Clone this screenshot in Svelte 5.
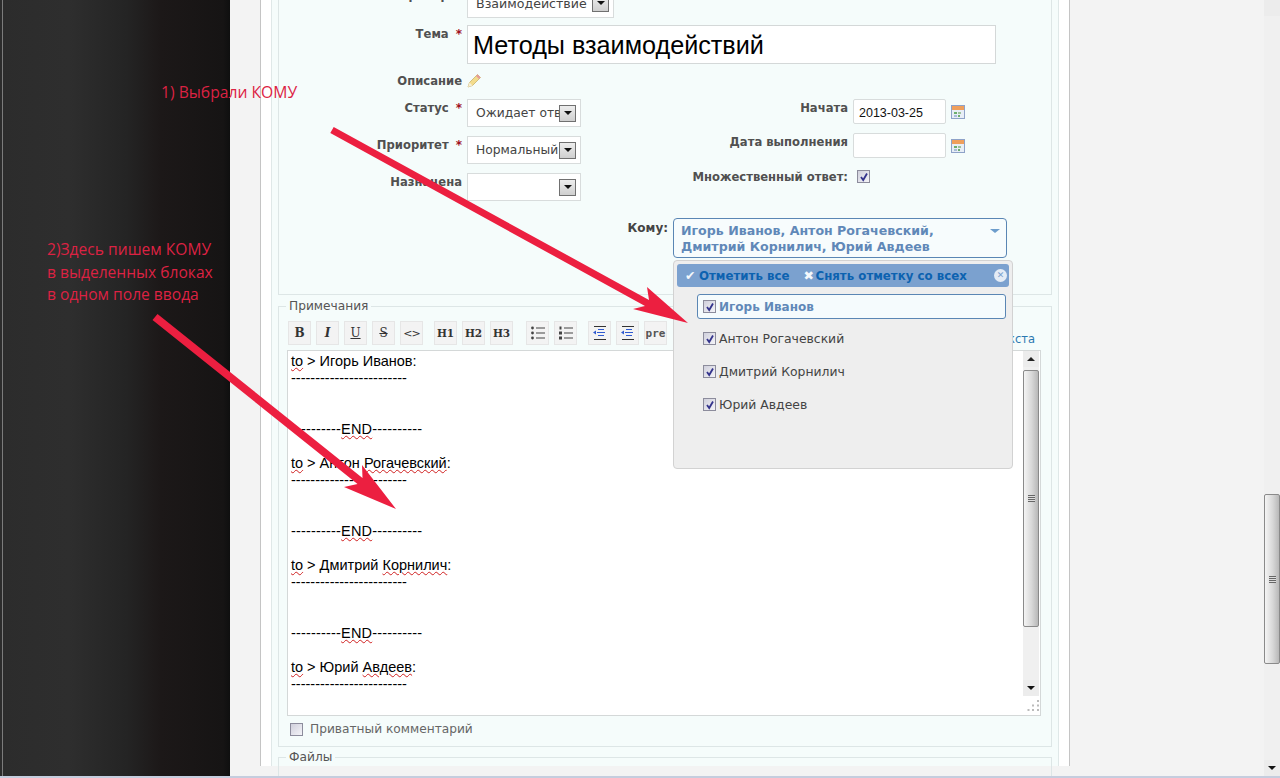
<script lang="ts">
	const mainRows = [
		{ label: 'Статус', req: true, value: 'Ожидает ответа' },
		{ label: 'Приоритет', req: true, value: 'Нормальный' },
		{ label: 'Назначена', req: false, value: '' }
	];
	const people = ['Игорь Иванов', 'Антон Рогачевский', 'Дмитрий Корнилич', 'Юрий Авдеев'];
	const notes = [
		{ name: 'Игорь', surname: 'Иванов', wavy: false },
		{ name: 'Антон', surname: 'Рогачевский', wavy: true },
		{ name: 'Дмитрий', surname: 'Корнилич', wavy: true },
		{ name: 'Юрий', surname: 'Авдеев', wavy: true }
	];
	const dashes = '------------------------';
	const side = '----------';
</script>

{#snippet check(on: boolean)}
	<span class="check">
		{#if on}
			<svg width="10" height="10" viewBox="0 0 10 10"><path d="M2 5 L4.2 8 L8 1.5" fill="none" stroke="#34348c" stroke-width="1.8"/></svg>
		{/if}
	</span>
{/snippet}

{#snippet combo(value: string, width: string)}
	<div class="combo {width}">
		<span class="combo-text">{value}</span>
		<span class="combo-btn"><i class="tri down"></i></span>
	</div>
{/snippet}

{#snippet calendar()}
	<svg class="cal" width="14" height="14" viewBox="0 0 14 14">
		<rect x="0.5" y="0.5" width="13" height="13" fill="#e8eef6" stroke="#8ea2c8"/>
		<rect x="1" y="1" width="12" height="4" fill="#ef9f5c"/>
		<rect x="3" y="7" width="3" height="2" fill="#6cae6c"/>
		<rect x="7" y="7" width="3" height="2" fill="#9cc29c"/>
		<rect x="3" y="10" width="3" height="2" fill="#a9bcd8"/>
		<rect x="7" y="10" width="2" height="2" fill="#6cae6c"/>
	</svg>
{/snippet}

{#snippet indent()}
	<svg width="16" height="16" viewBox="0 0 16 16">
		<rect x="2" y="1" width="12" height="1" fill="#333"/>
		<rect x="2" y="14" width="12" height="1" fill="#333"/>
		<path d="M6 4.5h6M5 7.5h8M6 10.5h6" stroke="#2f5ad0"/>
		<path d="M1 7.5 L4 5.5 V9.5 Z" fill="#2f5ad0"/>
	</svg>
{/snippet}

<div class="page">
	<div class="row">
		<aside class="side"></aside>

		<div class="content">
			<div class="sheet">
				<div class="panel">
					<div class="box">
						<div class="field first">
							<div class="lbl">Трекер <b class="star">*</b></div>
							{@render combo('Взаимодействие', 'w-tracker')}
						</div>

						<div class="field subject">
							<div class="lbl">Тема <b class="star">*</b></div>
							<div class="subject-input">Методы взаимодействий</div>
						</div>

						<div class="field descr">
							<div class="lbl">Описание</div>
							<svg width="15" height="15" viewBox="0 0 15 15">
								<path d="M1 14 L2.5 9.5 L10.5 1.5 L13.5 4.5 L5.5 12.5 Z" fill="#f3dc8c" stroke="#c9b26a" stroke-width="0.8"/>
								<path d="M10.5 1.5 L13.5 4.5 L12 6 L9 3 Z" fill="#e59a9a"/>
								<path d="M1 14 L2.5 9.5 L5.5 12.5 Z" fill="#f6eed6"/>
							</svg>
						</div>

						<div class="columns">
							<div class="col-left">
								{#each mainRows as r}
									<div class="field">
										<div class="lbl">{r.label} {#if r.req}<b class="star">*</b>{/if}</div>
										{@render combo(r.value, 'w-main')}
									</div>
								{/each}
							</div>
							<div class="col-right">
								<div class="field-r">
									<div class="lbl-r">Начата</div>
									<div class="date">2013-03-25</div>
									{@render calendar()}
								</div>
								<div class="field-r">
									<div class="lbl-r">Дата выполнения</div>
									<div class="date"></div>
									{@render calendar()}
								</div>
								<div class="field-r multi">
									<div class="lbl-r">Множественный ответ:</div>
									{@render check(true)}
								</div>
							</div>
						</div>

						<div class="to-row">
							<div class="to-label">Кому:</div>
							<div class="to-wrap">
								<div class="to-box">
									<span>Игорь Иванов, Антон Рогачевский, Дмитрий Корнилич, Юрий Авдеев</span>
									<i class="tri down blue"></i>
								</div>

								<div class="drop">
									<div class="drop-head">
										<span class="mark">✔</span><span class="act">Отметить все</span>
										<span class="mark second">✖</span><span class="act">Снять отметку со всех</span>
										<span class="close">✕</span>
									</div>
									<ul class="drop-list">
										{#each people as p, i}
											<li class:hl={i === 0}>{@render check(true)}<span>{p}</span></li>
										{/each}
									</ul>
								</div>
							</div>
						</div>
					</div>

					<fieldset class="notes">
						<legend>Примечания</legend>
						<div class="toolbar">
							<div class="group">
								<span class="tb"><b>B</b></span>
								<span class="tb"><b><i>I</i></b></span>
								<span class="tb"><u>U</u></span>
								<span class="tb"><s>S</s></span>
								<span class="tb sans">&lt;&gt;</span>
							</div>
							<div class="group heads">
								<span class="tb"><b>H1</b></span>
								<span class="tb"><b>H2</b></span>
								<span class="tb"><b>H3</b></span>
							</div>
							<div class="group">
								<span class="tb">
									<svg width="16" height="14" viewBox="0 0 16 14"><g fill="#444"><circle cx="2.5" cy="2" r="1.4"/><circle cx="2.5" cy="7" r="1.4"/><circle cx="2.5" cy="12" r="1.4"/><rect x="6" y="1.5" width="9" height="1"/><rect x="6" y="6.5" width="9" height="1"/><rect x="6" y="11.5" width="9" height="1"/></g></svg>
								</span>
								<span class="tb">
									<svg width="16" height="14" viewBox="0 0 16 14"><g fill="#444"><rect x="1.5" y="0.5" width="2" height="3"/><rect x="1" y="5.5" width="3" height="3"/><rect x="1" y="10.5" width="3" height="3"/><rect x="6" y="1.5" width="9" height="1"/><rect x="6" y="6.5" width="9" height="1"/><rect x="6" y="11.5" width="9" height="1"/></g></svg>
								</span>
							</div>
							<div class="group">
								<span class="tb">{@render indent()}</span>
								<span class="tb">{@render indent()}</span>
								<span class="tb mono">pre</span>
							</div>
							<a class="link" href="#top">Размер текста</a>
						</div>

						<div class="editor">
							<div class="editor-main">
								<div class="text">
									{#each notes as n, i}
										<p class="note">
											<span class="wavy">to</span> &gt; {n.name} <span class:wavy={n.wavy}>{n.surname}</span>:<br/>{dashes}
										</p>
										{#if i < notes.length - 1}
											<p class="end">{side}<span class="wavy">END</span>{side}</p>
										{/if}
									{/each}
								</div>
								<div class="sb inner">
									<span class="sb-btn"><i class="tri up"></i></span>
									<div class="sb-track">
										<div class="thumb tall"><span class="grip"></span></div>
									</div>
									<span class="sb-btn"><i class="tri down"></i></span>
								</div>
							</div>
							<div class="editor-foot">
								<svg width="12" height="12" viewBox="0 0 12 12"><g fill="#bbb"><rect x="10" y="1" width="2" height="2"/><rect x="5" y="5.5" width="2" height="2"/><rect x="10" y="5.5" width="2" height="2"/><rect x="0.5" y="10" width="2" height="2"/><rect x="5" y="10" width="2" height="2"/><rect x="10" y="10" width="2" height="2"/></g></svg>
							</div>
						</div>

						<div class="private">
							{@render check(false)}
							<span>Приватный комментарий</span>
						</div>
					</fieldset>

					<fieldset class="files">
						<legend>Файлы</legend>
					</fieldset>
				</div>
			</div>
		</div>

		<div class="sb page-sb">
			<span class="sb-btn"></span>
			<div class="sb-track">
				<div class="thumb page-thumb"><span class="grip"></span></div>
			</div>
			<span class="sb-btn"><i class="tri down"></i></span>
		</div>
	</div>
	<div class="foot-line"></div>

	<!-- annotations drawn on top of the screenshot -->
	<div class="note-a">1) Выбрали КОМУ</div>
	<div class="note-b">2)Здесь пишем КОМУ<br/>в выделенных блоках<br/>в одном поле ввода</div>
	<svg class="arrows" width="1280" height="778" viewBox="0 0 1280 778">
		<path d="M330.3 133 L645 306 L633 309 L688 323 L647 287 L649 300 L333.7 127 Z" fill="#ec1f40"/>
		<path d="M152.5 320 L357.5 484 L344 487 L396 509 L362 465 L362.5 478 L157.5 314 Z" fill="#ec1f40"/>
	</svg>
</div>

<style>
	:global(body) {
		margin: 0;
		font-family: "DejaVu Sans", sans-serif;
	}
	.page {
		position: relative;
		display: flex;
		flex-direction: column;
		width: 1280px;
		height: 778px;
		overflow: hidden;
	}
	.row {
		display: flex;
		height: 776px;
	}
	.foot-line {
		height: 2px;
		background: #c5cdde;
	}
	.side {
		width: 230px;
		flex: none;
		background:
			linear-gradient(90deg, transparent 2px, #7c7c7c 2px, #7c7c7c 3px, transparent 3px),
			linear-gradient(90deg, #2c2c2c 0, #2e2e2e 30%, #242424 55%, #1c1818 70%, #161414 97%, #0f0f0f 100%);
	}
	.content {
		width: 1034px;
		flex: none;
		background: #f3f3f3;
		padding-left: 30px;
		box-sizing: border-box;
	}
	.sheet {
		width: 810px;
		height: 100%;
		box-sizing: border-box;
		background: #fff;
		border-left: 1px solid #c4c4c4;
		border-right: 1px solid #c4c4c4;
		padding: 0 10px;
	}
	.panel {
		height: 100%;
		box-sizing: border-box;
		background: #f5fcfb;
		border-left: 1px solid #dfe8e8;
		border-right: 1px solid #dfe8e8;
		padding: 0 6px;
	}

	/* top box */
	.box {
		margin-top: -10px;
		height: 305px;
		box-sizing: border-box;
		border: 1px solid #dde6e6;
		border-top: 0;
	}
	.field {
		display: flex;
		align-items: flex-start;
		gap: 5px;
	}
	.first {
		height: 26px;
		margin-bottom: 9px;
	}
	.first .lbl {
		padding-top: 0;
		margin-top: -3px;
	}
	.first .combo {
		padding-bottom: 2px;
	}
	.lbl {
		width: 183px;
		text-align: right;
		font-size: 11.6px;
		font-weight: bold;
		line-height: 16px;
		color: #505050;
		padding-top: 1px;
		white-space: nowrap;
	}
	.star {
		color: #a01020;
		margin-left: 3px;
		font-size: 12px;
	}
	.subject-input {
		width: 529px;
		height: 39px;
		box-sizing: border-box;
		border: 1px solid #d4d8d8;
		background: #fff;
		font: 25.2px/38px "Liberation Sans", sans-serif;
		color: #000;
		padding-left: 5px;
	}
	.descr {
		margin-top: 8px;
		height: 27px;
		align-items: center;
		padding-bottom: 9px;
		box-sizing: border-box;
	}
	.descr .lbl {
		padding-top: 0;
	}
	.descr svg {
		margin: -2px 0 0 0;
	}
	.columns {
		display: flex;
		height: 119px;
	}
	.col-left {
		display: flex;
		flex-direction: column;
		gap: 9px;
		width: 358px;
	}
	.combo {
		position: relative;
		display: flex;
		align-items: center;
		height: 28px;
		box-sizing: border-box;
		border: 1px solid #d8dcdc;
		background: #fff;
		padding: 0 4px 0 8px;
		overflow: hidden;
	}
	.w-main {
		width: 114px;
	}
	.w-tracker {
		width: 147px;
	}
	.combo-text {
		flex: 1;
		min-width: 0;
		overflow: hidden;
		white-space: nowrap;
		font-size: 12.3px;
		color: #444;
	}
	.w-tracker .combo-text {
		font-size: 12.6px;
	}
	.combo-btn {
		flex: none;
		display: flex;
		align-items: center;
		justify-content: center;
		width: 17px;
		height: 17px;
		box-sizing: border-box;
		border: 1px solid #707070;
		background: linear-gradient(#ededed, #cfcfcf);
	}
	.tri {
		display: block;
		width: 0;
		height: 0;
		border-left: 4px solid transparent;
		border-right: 4px solid transparent;
	}
	.tri.down {
		border-top: 4px solid #111;
	}
	.tri.up {
		border-bottom: 4px solid #222;
	}
	.tri.blue {
		border-top-color: #6d9dcc;
		border-left-width: 5px;
		border-right-width: 5px;
	}
	.col-right {
		display: flex;
		flex-direction: column;
		gap: 9px;
	}
	.field-r {
		display: flex;
		align-items: flex-start;
		gap: 5px;
	}
	.lbl-r {
		width: 211px;
		text-align: right;
		font-size: 11.6px;
		font-weight: bold;
		line-height: 16px;
		padding-top: 1px;
		color: #505050;
		white-space: nowrap;
	}
	.date {
		width: 93px;
		height: 25px;
		box-sizing: border-box;
		border: 1px solid #d8dcdc;
		border-radius: 2px;
		background: #fff;
		font: 12.5px/26px "Liberation Sans", sans-serif;
		color: #111;
		padding-left: 5px;
	}
	.cal {
		margin-top: 6px;
	}
	.multi {
		margin-top: 1px;
		align-items: center;
	}
	.multi .check {
		margin-left: 4px;
	}
	.check {
		display: inline-flex;
		align-items: center;
		justify-content: center;
		flex: none;
		width: 13px;
		height: 13px;
		box-sizing: border-box;
		border: 1px solid #8c8c9c;
		background: linear-gradient(135deg, #d0d0dc, #f4f4f8);
	}

	/* recipients */
	.to-row {
		display: flex;
		padding-left: 312px;
	}
	.to-label {
		width: 77px;
		text-align: right;
		font-size: 12px;
		font-weight: bold;
		color: #444;
		line-height: 16px;
		padding-top: 2px;
		margin-right: 5px;
	}
	.to-wrap {
		position: relative;
		width: 334px;
		z-index: 2;
	}
	.to-box {
		display: flex;
		align-items: flex-start;
		justify-content: space-between;
		height: 40px;
		box-sizing: border-box;
		border: 1px solid #5a86b4;
		border-radius: 4px;
		background: #f7fcfd;
		padding: 4px 6px 0 7px;
		font-size: 12.6px;
		font-weight: bold;
		line-height: 16px;
		color: #6088b8;
	}
	.to-box span {
		width: 290px;
	}
	.to-box .tri {
		margin-top: 6px;
	}
	.drop {
		position: absolute;
		top: 42px;
		left: 0;
		width: 340px;
		height: 209px;
		box-sizing: border-box;
		background: #eeeeee;
		border: 1px solid #d2d2d2;
		border-radius: 4px;
		padding: 3px;
	}
	.drop-head {
		display: flex;
		align-items: center;
		height: 23px;
		background: #7ba1cf;
		border-radius: 3px;
		padding: 0 2px 0 8px;
		font-size: 11.8px;
		font-weight: bold;
	}
	.mark {
		color: #f4f8fc;
		font-size: 12.5px;
		width: 14px;
	}
	.mark.second {
		margin-left: 14px;
		width: 12px;
	}
	.act {
		color: #0c62b0;
		white-space: nowrap;
	}
	.close {
		margin-left: auto;
		width: 13px;
		height: 13px;
		border-radius: 50%;
		background: #e4ecf6;
		color: #7ba1cf;
		font-size: 9px;
		line-height: 13px;
		text-align: center;
	}
	.drop-list {
		list-style: none;
		margin: 7px 3px 0 20px;
		padding: 0;
	}
	.drop-list li {
		display: flex;
		align-items: center;
		gap: 3px;
		height: 25px;
		box-sizing: border-box;
		border: 1px solid transparent;
		border-radius: 3px;
		padding: 0 0 2px 5px;
		margin-bottom: 8px;
		font-size: 12.4px;
		color: #444;
	}
	.drop-list li.hl {
		border-color: #5a86b4;
		background: #f5fbfd;
		color: #6088b8;
		font-weight: bold;
		font-size: 12px;
		padding-bottom: 0;
	}

	/* notes */
	fieldset {
		margin: 0;
		border: 1px solid #dde6e6;
		padding: 0 10px 0 8px;
		min-width: 0;
	}
	legend {
		padding: 0 3px;
		margin-left: -1px;
		font-size: 12.2px;
		line-height: 14px;
		color: #555;
	}
	.notes {
		margin-top: 4px;
		height: 448px;
		box-sizing: border-box;
	}
	.toolbar {
		display: flex;
		align-items: flex-start;
		gap: 11px;
		margin: 8px 0 0 1px;
		height: 29px;
	}
	.group {
		display: flex;
		gap: 5px;
	}
	.group.heads {
		margin-right: 2px;
	}
	.tb {
		display: flex;
		align-items: center;
		justify-content: center;
		width: 23px;
		height: 24px;
		box-sizing: border-box;
		border: 1px solid #e6e6e6;
		background: #f3f3f3;
		font: 12px "DejaVu Serif", serif;
		color: #333;
	}
	.heads .tb {
		font-size: 10.5px;
	}
	.tb.sans {
		font: 11px "DejaVu Sans", sans-serif;
		letter-spacing: -1px;
	}
	.tb.mono {
		font: bold 11px "DejaVu Sans Mono", monospace;
		color: #555;
	}
	.link {
		margin-left: auto;
		margin-right: 6px;
		margin-top: 11px;
		font: 11.5px "DejaVu Sans", sans-serif;
		color: #2a78b0;
		text-decoration: none;
		white-space: nowrap;
	}
	.editor {
		width: 754px;
		height: 366px;
		box-sizing: border-box;
		border: 1px solid #d4d8d8;
		background: #fff;
		display: flex;
		flex-direction: column;
	}
	.editor-main {
		flex: 1;
		display: flex;
		min-height: 0;
	}
	.text {
		flex: 1;
		padding: 2px 0 0 3px;
		font: 14.5px/17px "Liberation Sans", sans-serif;
		color: #000;
	}
	.text p {
		margin: 0;
	}
	.note {
		padding-bottom: 34px;
	}
	.end {
		padding-bottom: 17px;
		letter-spacing: 0.18px;
	}
	.wavy {
		text-decoration: underline wavy #d02020 1px;
		text-underline-offset: 1px;
	}
	.editor-foot {
		height: 16px;
		flex: none;
		display: flex;
		justify-content: flex-end;
		padding-right: 1px;
	}
	.sb {
		display: flex;
		flex-direction: column;
		width: 16px;
		flex: none;
		background: #f0f0f0;
	}
	.inner {
		margin-right: 1px;
		height: 345px;
	}
	.sb-btn {
		flex: none;
		height: 16px;
		display: flex;
		align-items: center;
		justify-content: center;
		background: #ececec;
	}
	.sb-track {
		flex: 1;
		display: flex;
		flex-direction: column;
	}
	.thumb {
		display: flex;
		align-items: center;
		justify-content: center;
		box-sizing: border-box;
		border: 1px solid #8a8a8a;
		border-radius: 2px;
		background: linear-gradient(90deg, #f4f4f4, #d8d8d8 55%, #b8b8b8);
	}
	.tall {
		margin-top: 3px;
		height: 257px;
	}
	.grip {
		width: 7px;
		height: 7px;
		background: repeating-linear-gradient(#666 0 1px, #ddd 1px 2px);
	}
	.page-sb {
		width: 16px;
	}
	.page-thumb {
		margin-top: 478px;
		height: 170px;
	}
	.private {
		display: flex;
		align-items: center;
		gap: 7px;
		margin: 6px 0 0 3px;
		font-size: 12.2px;
		line-height: 14px;
		color: #666;
	}
	.files {
		margin-top: 3px;
		height: 40px;
		box-sizing: border-box;
	}

	/* annotations */
	.note-a,
	.note-b {
		position: absolute;
		font-family: "Open Sans", sans-serif;
		color: #dc2243;
		z-index: 5;
		white-space: nowrap;
	}
	.note-a {
		left: 161px;
		top: 82px;
		font-size: 15.7px;
		line-height: 20px;
	}
	.note-b {
		left: 47px;
		top: 238px;
		font-size: 15.6px;
		line-height: 22.5px;
	}
	.arrows {
		position: absolute;
		top: 0;
		left: 0;
		z-index: 6;
		pointer-events: none;
	}
</style>
